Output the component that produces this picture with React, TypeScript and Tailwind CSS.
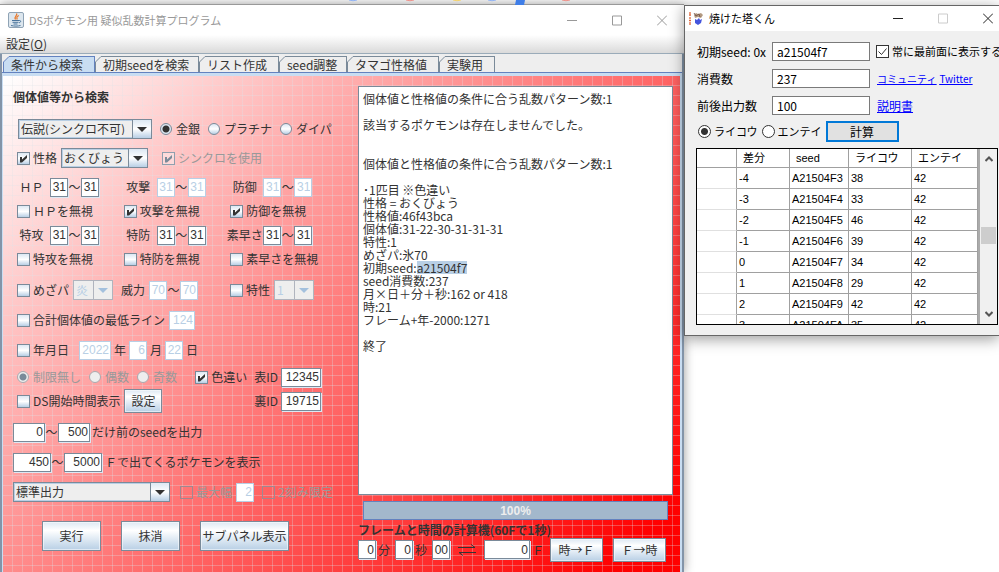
import type { ReactNode } from 'react'

const TABS = [
  { label: '条件から検索', width: 'w-[92px]' },
  { label: '初期seedを検索', width: 'w-[104px]' },
  { label: 'リスト作成', width: 'w-[80px]' },
  { label: 'seed調整', width: 'w-[68px]' },
  { label: 'タマゴ性格値', width: 'w-[92px]' },
  { label: '実験用', width: 'w-[56px]' },
]

const LOG_BEFORE = `個体値と性格値の条件に合う乱数パターン数:1

該当するポケモンは存在しませんでした。


個体値と性格値の条件に合う乱数パターン数:1

･1匹目 ※色違い
性格 = おくびょう
性格値:46f43bca
個体値:31-22-30-31-31-31
特性:1
めざパ:氷70
初期seed:`

const LOG_AFTER = `
seed消費数:237
月×日＋分＋秒:162 or 418
時:21
フレーム+年-2000:1271

終了`

const ROWS = [
  ['-4', 'A21504F3', '38', '42'],
  ['-3', 'A21504F4', '33', '42'],
  ['-2', 'A21504F5', '46', '42'],
  ['-1', 'A21504F6', '39', '42'],
  ['0', 'A21504F7', '34', '42'],
  ['1', 'A21504F8', '29', '42'],
  ['2', 'A21504F9', '42', '42'],
  ['3', 'A21504FA', '35', '42'],
]

interface CheckProps {
  label: string
  checked?: boolean
  disabled?: boolean
  clear?: boolean
}

function Check({ label, checked, disabled, clear }: CheckProps) {
  return (
    <label className={`flex items-center gap-[3px] ${disabled ? 'text-[#999999]' : ''}`}>
      <span className="relative flex">
        <input
          type="checkbox"
          defaultChecked={checked}
          disabled={disabled}
          className={`peer size-[13px] appearance-none border ${
            clear
              ? 'border-[#a08890] bg-transparent'
              : disabled
                ? 'border-[#8f9fae] bg-[#ffffff55]'
                : 'border-[#7a8a99] bg-linear-to-b from-[#dde8f3] via-white to-[#b8cfe5]'
          }`}
        />
        <svg className="pointer-events-none absolute inset-0 hidden size-[13px] peer-checked:block" viewBox="0 0 13 13">
          <path d="M3 5h2v2.500L10 3v3L5 10.500H3z" fill={disabled ? '#7a8a99' : '#333'} />
        </svg>
      </span>
      {label}
    </label>
  )
}

interface RadioProps {
  name: string
  label: string
  checked?: boolean
  disabled?: boolean
}

function Radio({ name, label, checked, disabled }: RadioProps) {
  return (
    <label className={`flex items-center gap-1 ${disabled ? 'text-[#999999]' : ''}`}>
      <input
        type="radio"
        name={name}
        defaultChecked={checked}
        disabled={disabled}
        className={`size-3 appearance-none rounded-full border ${
          disabled
            ? 'border-[#a9a9ae] bg-[#eeeeee] checked:bg-[radial-gradient(circle,#7a8a99_3px,transparent_4px)]'
            : 'border-[#7a8a99] bg-linear-to-b from-[#dde8f3] via-white to-[#b8cfe5] checked:bg-[radial-gradient(circle,#333_3px,#dde8f3_4px)]'
        }`}
      />
      {label}
    </label>
  )
}

interface FieldProps {
  name: string
  value: string
  width?: string
  disabled?: boolean
}

function Field({ name, value, width = 'w-[18px]', disabled }: FieldProps) {
  return (
    <input
      type="text"
      aria-label={name}
      defaultValue={value}
      disabled={disabled}
      className={`h-[19px] shrink-0 border bg-white pr-px text-right font-['Liberation_Sans',sans-serif] text-xs ${width} ${
        disabled ? 'border-[#b8cfe5] text-[#b8cfe5]' : 'border-[#7a8a99] text-[#333333] shadow-[1px_1px_0_#dde8f3]'
      }`}
    />
  )
}

interface ComboProps {
  name: string
  value: string
  width: string
  disabled?: boolean
}

function Combo({ name, value, width, disabled }: ComboProps) {
  return (
    <span className={`relative flex h-5 shrink-0 ${width}`}>
      <select
        aria-label={name}
        disabled={disabled}
        className={`size-full appearance-none border bg-[#eeeeee] pl-[2px] opacity-100 ${
          disabled ? 'border-[#b0b4be] text-[#b8cfe5]' : 'border-[#7a8a99] shadow-[inset_0_0_0_1px_#b8cfe5]'
        }`}
      >
        <option>{value}</option>
      </select>
      <span
        className={`pointer-events-none absolute inset-y-0 right-0 flex w-5 items-center justify-center border ${
          disabled ? 'border-[#b0b4be] bg-[#eeeeee]' : 'border-[#7a8a99] bg-linear-to-b from-[#dde8f3] via-white to-[#b8cfe5]'
        }`}
      >
        <svg width="10" height="5" viewBox="0 0 10 5">
          <path d="M0 0h10L5 5z" fill={disabled ? '#a3c0dd' : '#333'} />
        </svg>
      </span>
    </span>
  )
}

function MetalButton({ children, className }: { children: ReactNode; className: string }) {
  return (
    <button
      className={`shrink-0 border border-[#7a8a99] bg-linear-to-b from-[#dde8f3] via-white via-30% to-[#b8cfe5] shadow-[inset_0_0_0_1px_#ffffff88] ${className}`}
    >
      {children}
    </button>
  )
}

function Range({ name, disabled, value = '31' }: { name: string; disabled?: boolean; value?: string }) {
  return (
    <span className="flex items-center">
      <Field name={`${name} 最小`} value={value} disabled={disabled} />
      <span className="w-[13px] text-center">～</span>
      <Field name={`${name} 最大`} value={value} disabled={disabled} />
    </span>
  )
}

function Stat({ name, disabled }: { name: string; disabled?: boolean }) {
  return (
    <div className="flex items-center">
      <span className="flex w-[33px] justify-center pr-1">{name}</span>
      <Range name={name} disabled={disabled} />
    </div>
  )
}

function JavaIcon() {
  return (
    <svg className="size-4" viewBox="0 0 16 16" fill="none">
      <rect x=".5" y=".5" width="15" height="15" rx="1.5" fill="#dce6ee" stroke="#8fa3b5" />
      <path d="M8.5 1.5c1.5 2-3 3-1 6M10.8 3.5C8 5 8.8 5.600 9.200 7.500" stroke="#e8792b" strokeWidth="1.300" />
      <path d="M4 8.500h7M4.500 10.300h6M5.500 12h4M3 13.500c3 .8 7 .8 9.500 0M11.200 8.500c2-.4 2 1.900-.2 2.300" stroke="#4b759c" />
    </svg>
  )
}

function TowerIcon() {
  return (
    <svg className="size-4" viewBox="0 0 16 16" fill="none">
      <path d="M2 1v2M1 4h2M2 6v2M1 9.500h2M2 11v3" stroke="#e0673a" strokeWidth="1.300" />
      <path d="M6 4l2-2 2 1 3-1 2 2-2 3-3-1-3 1z" fill="#b39a82" />
      <path d="M6 2l2 3 3-2 1 3" stroke="#6a4a40" strokeWidth=".8" />
      <path d="M7 8l2 1 2-2 1 2 2-1-1 4-3 2-3-2z" fill="#4555dd" />
    </svg>
  )
}

function WindowButtons({ muted }: { muted?: boolean }) {
  const stroke = muted ? '#999' : '#222'
  return (
    <div className={`ml-auto flex items-center gap-[35px] ${muted ? 'pr-[17px]' : 'pr-[6px]'}`}>
      <button aria-label="最小化">
        <svg width="10" height="11" viewBox="0 0 10 11" stroke={stroke}><path d="M0 5.500h10" /></svg>
      </button>
      <button aria-label="最大化">
        <svg width="10" height="11" viewBox="0 0 10 11" fill="none" stroke={muted ? '#999' : '#ccc'}><path d="M.5 1h9v9h-9z" /></svg>
      </button>
      <button aria-label="閉じる">
        <svg width="10" height="11" viewBox="0 0 10 11" stroke={stroke}><path d="M0 .5l10 10M10 .5l-10 10" /></svg>
      </button>
    </div>
  )
}

function SearchForm() {
  return (
    <form className="w-[355px] shrink-0 pt-2 pr-[37px] pl-[10px]" onSubmit={(e) => e.preventDefault()}>
      <h1 className="flex h-[26px] items-center font-bold">個体値等から検索</h1>

      <div className="mt-[5px] flex h-7 items-center gap-2 pl-[5px]">
        <Combo name="種類" value="伝説(シンクロ不可)" width="w-[134px]" />
        <Radio name="version" label="金銀" checked />
        <Radio name="version" label="プラチナ" />
        <Radio name="version" label="ダイパ" />
      </div>
      <div className="flex h-[30px] items-center gap-1 pl-1">
        <Check label="性格" checked />
        <Combo name="性格" value="おくびょう" width="w-[87px]" />
        <div className="ml-[10px]">
          <Check label="シンクロを使用" checked disabled />
        </div>
      </div>

      {/* Individual values */}
      <div className="mt-[2px] ml-1 grid w-[320px] auto-rows-[24px] grid-cols-3 items-center">
        <Stat name="ＨＰ" />
        <Stat name="攻撃" disabled />
        <Stat name="防御" disabled />
        <Check label="ＨＰを無視" />
        <Check label="攻撃を無視" checked />
        <Check label="防御を無視" checked />
        <Stat name="特攻" />
        <Stat name="特防" />
        <Stat name="素早さ" />
        <Check label="特攻を無視" />
        <Check label="特防を無視" />
        <Check label="素早さを無視" />
      </div>

      <div className="mt-1 flex h-[30px] items-center gap-1 pl-1">
        <Check label="めざパ" />
        <Combo name="めざパ" value="炎" width="w-10" disabled />
        <span className="ml-1">威力</span>
        <Range name="威力" value="70" disabled />
        <div className="ml-7">
          <Check label="特性" />
        </div>
        <Combo name="特性" value="1" width="w-10" disabled />
      </div>
      <div className="flex h-[30px] items-center gap-1 pl-1">
        <Check label="合計個体値の最低ライン" />
        <Field name="最低ライン" value="124" width="w-[26px]" disabled />
      </div>
      <div className="flex h-[30px] items-center gap-[3px] pl-1">
        <Check label="年月日" />
        <span className="w-1" />
        <Field name="年" value="2022" width="w-8" disabled />
        年
        <Field name="月" value="6" disabled />
        月
        <Field name="日" value="22" disabled />
        日
      </div>

      <div className="flex h-6 items-center gap-2 pl-1">
        <Radio name="parity" label="制限無し" checked disabled />
        <Radio name="parity" label="偶数" disabled />
        <Radio name="parity" label="奇数" disabled />
        <div className="ml-auto flex items-center gap-[3px]">
          <Check label="色違い" checked />
          <span className="ml-1">表ID</span>
          <Field name="表ID" value="12345" width="w-10" />
        </div>
      </div>
      <div className="flex h-6 items-center gap-1 pl-1">
        <Check label="DS開始時間表示" />
        <MetalButton className="h-6 w-[38px]">設定</MetalButton>
        <div className="ml-auto flex items-center gap-[3px]">
          裏ID
          <Field name="裏ID" value="19715" width="w-10" />
        </div>
      </div>

      <div className="mt-1 flex h-[30px] items-center">
        <Field name="seed 最小" value="0" width="w-8" />
        <span className="w-[13px] text-center">～</span>
        <Field name="seed 最大" value="500" width="w-8" />
        <span className="ml-[2px]">だけ前のseedを出力</span>
      </div>
      <div className="flex h-[30px] items-center">
        <Field name="F 最小" value="450" width="w-[38px]" />
        <span className="w-[13px] text-center">～</span>
        <Field name="F 最大" value="5000" width="w-[38px]" />
        <span className="ml-[3px]">Ｆで出てくるポケモンを表示</span>
      </div>
      <div className="flex h-[30px] items-center gap-1">
        <Combo name="出力" value="標準出力" width="w-[157px]" />
        <div className="ml-[6px]">
          <Check label="最大幅" disabled clear />
        </div>
        <Field name="最大幅" value="2" disabled />
        <div className="ml-1">
          <Check label="2刻み限定" disabled clear />
        </div>
      </div>

      <div className="mt-[14px] flex gap-5 pl-[29px]">
        <MetalButton className="h-[30px] w-[59px]">実行</MetalButton>
        <MetalButton className="h-[30px] w-[59px]">抹消</MetalButton>
        <MetalButton className="h-[30px] w-[89px]">サブパネル表示</MetalButton>
      </div>
    </form>
  )
}

function OutputPane() {
  return (
    <div className="flex min-w-0 flex-1 flex-col pt-[10px] pr-[7px] pb-[10px]">
      <div
        role="log"
        className="flex-1 overflow-hidden border border-[#7a8a99] bg-white pt-[5px] pl-1 leading-[13px] whitespace-pre text-[#333333]"
      >
        {LOG_BEFORE}
        <mark className="inline-block h-[13px] bg-[#b8cfe5] align-top text-inherit">a21504f7</mark>
        {LOG_AFTER}
      </div>
      <div className="mx-[5px] mt-[6px] flex h-[19px] items-center justify-center border border-[#6382bf] bg-[#a3b8cc] font-['Liberation_Sans',sans-serif] font-bold text-[#eeeeee]">
        100%
      </div>
      <h2 className="mt-[3px] flex h-[14px] items-center font-bold">フレームと時間の計算機(60Fで1秒)</h2>
      <div className="flex h-[25px] items-center gap-[2px]">
        <Field name="分" value="0" />
        分
        <span className="w-px" />
        <Field name="秒" value="0" />
        秒
        <span className="w-px" />
        <Field name="1/60秒" value="00" />
        <svg className="mx-[5px]" width="20" height="12" viewBox="0 0 20 12" fill="none" stroke="#333">
          <path d="M1 3.500h17l-4-3M19 8.500H2l4 3" />
        </svg>
        <Field name="フレーム" value="0" width="w-[46px]" />
        Ｆ
        <MetalButton className="ml-1 h-6 w-[53px]">時→Ｆ</MetalButton>
        <MetalButton className="ml-2 h-6 w-[53px]">Ｆ→時</MetalButton>
      </div>
    </div>
  )
}

function SearchWindow() {
  return (
    <main className="mt-1 flex min-w-0 flex-1 flex-col border-t border-[#999999] bg-[#eeeeee] shadow-[0_0_10px_#00000066]">
      <header className="flex h-[30px] items-center gap-[5px] bg-white pl-2 text-[11px] text-[#999999]">
        <JavaIcon />
        <span>DSポケモン用 疑似乱数計算プログラム</span>
        <WindowButtons muted />
      </header>
      <nav className="flex h-[19px] items-center border-b border-[#9aabb9] bg-linear-to-b from-white to-[#dadada] pl-[6px]">
        <button>設定(<u>O</u>)</button>
      </nav>

      <div className="flex flex-1 flex-col border-x-2 border-[#8394a8] pt-[2px]">
        <div role="tablist" className="flex h-4 pl-px">
          {TABS.map((tab, i) => (
            <button key={tab.label} role="tab" aria-selected={i === 0} className={`flex shrink-0 ${tab.width}`}>
              <svg className="shrink-0" width="6" height="16" viewBox="0 0 6 16">
                <path
                  d="M.5 17V6L6 .5V17"
                  fill={i === 0 ? '#c8ddf2' : '#eeeeee'}
                />
                <path d="M.5 17V6L6 .5" fill="none" stroke={i === 0 ? '#6382bf' : '#7a8a99'} />
              </svg>
              <span
                className={`flex h-4 flex-1 items-center border-t border-r pl-[2px] ${
                  i === 0 ? 'border-[#6382bf] bg-[#c8ddf2]' : 'border-[#7a8a99]'
                }`}
              >
                {tab.label}
              </span>
            </button>
          ))}
        </div>
        <div className="flex flex-1 border-t border-[#6382bf]">
          <div className="flex flex-1 border-t-[3px] border-r-2 border-l border-[#c8ddf2] bg-[repeating-linear-gradient(90deg,transparent_0_9px,#dde4e84d_9px_10px),repeating-linear-gradient(180deg,transparent_0_9px,#dde4e84d_9px_10px),linear-gradient(135deg,#fff_0%,#f00_94%)]">
            <SearchForm />
            <OutputPane />
          </div>
        </div>
      </div>
    </main>
  )
}

const toolInput = 'h-[19px] w-[98px] border border-[#7a7a7a] bg-white pl-1 text-xs text-black'
const toolCell = 'h-[21px] border-r border-b border-[#a0a0a0] pl-[2px]'
const toolHead = 'h-[19px] border-r border-b border-[#a0a0a0] font-normal text-left'

function ToolRadio({ label, checked }: { label: string; checked?: boolean }) {
  return (
    <label className="flex items-center gap-[3px]">
      <input
        type="radio"
        name="target"
        defaultChecked={checked}
        className="size-[13px] appearance-none rounded-full border border-[#333333] bg-white checked:bg-[radial-gradient(circle,#333_3px,#fff_4px)]"
      />
      {label}
    </label>
  )
}

function TowerWindow() {
  return (
    <aside className="relative mt-[5px] w-[315px] shrink-0 self-start overflow-hidden border-y border-l border-[#666666] bg-[#f0f0f0] pb-[10px] text-black shadow-[0_3px_14px_#00000066]">
      <header className="flex h-[25px] items-center gap-[5px] bg-white pl-[3px] text-[11px]">
        <TowerIcon />
        <span>焼けた塔くん</span>
        <WindowButtons />
      </header>

      <div className="mt-[11px] grid auto-rows-[19px] grid-cols-[75px_98px_1fr] items-center gap-y-2 pl-3 whitespace-nowrap">
        <label htmlFor="seed">初期seed: 0x</label>
        <input id="seed" className={toolInput} defaultValue="a21504f7" />
        <label className="flex items-center gap-[3px] pl-[6px] text-[11px]">
          <span className="relative flex">
            <input type="checkbox" defaultChecked className="peer size-[13px] appearance-none border border-[#333333] bg-white" />
            <svg className="pointer-events-none absolute inset-0 hidden size-[13px] peer-checked:block" viewBox="0 0 13 13" fill="none" stroke="#333">
              <path d="M2.500 6.500l3 3 5-6" />
            </svg>
          </span>
          常に最前面に表示する
        </label>
        <label htmlFor="advance">消費数</label>
        <input id="advance" className={toolInput} defaultValue="237" />
        <div className="flex gap-[3px] pl-[7px] text-[10px] text-[#0000ff] underline">
          <a href="#community">コミュニティ</a>
          <a href="#twitter">Twitter</a>
        </div>
        <label htmlFor="count">前後出力数</label>
        <input id="count" className={toolInput} defaultValue="100" />
        <a href="#manual" className="pl-[7px] text-[#0000ff] underline">説明書</a>
      </div>

      <div className="mt-[6px] flex h-[21px] items-center gap-1 pl-[13px] text-[11px]">
        <ToolRadio label="ライコウ" checked />
        <ToolRadio label="エンテイ" />
        <button className="h-[21px] w-[73px] border-2 border-[#0078d7] bg-[#e1e1e1] text-xs">計算</button>
      </div>

      <div className="mt-[6px] mr-px ml-[11px] flex h-[177px] overflow-hidden border border-black bg-[#ababab]">
        <div className="flex-1 overflow-hidden">
          <table className="w-[281px] table-fixed border-separate border-spacing-0 bg-white font-['Liberation_Sans','Noto_Sans_CJK_JP',sans-serif] text-[11px] leading-none">
            <thead>
              <tr>
                <th className={`w-10 ${toolHead}`} />
                <th className={`w-[53px] pl-[6px] ${toolHead}`}>差分</th>
                <th className={`w-[59px] pl-[6px] ${toolHead}`}>seed</th>
                <th className={`w-[63px] pl-[6px] ${toolHead}`}>ライコウ</th>
                <th className={`w-[66px] pl-[6px] ${toolHead}`}>エンテイ</th>
              </tr>
            </thead>
            <tbody>
              {ROWS.map((row) => (
                <tr key={row[0]}>
                  <td className="h-[21px] border-r border-b border-r-[#a0a0a0] border-b-[#e0e0e0]" />
                  {row.map((cell, i) => (
                    <td key={i} className={toolCell}>{cell}</td>
                  ))}
                </tr>
              ))}
            </tbody>
          </table>
        </div>
        <div className="flex w-[17px] shrink-0 flex-col items-center bg-[#f0f0f0] py-[7px]">
          <svg width="8" height="6" viewBox="0 0 8 6" fill="none" stroke="#555" strokeWidth="2"><path d="M.5 5L4 1.500 7.500 5" /></svg>
          <div className="mt-[65px] h-[17px] w-[15px] bg-[#cdcdcd]" />
          <svg className="mt-auto" width="8" height="6" viewBox="0 0 8 6" fill="none" stroke="#555" strokeWidth="2"><path d="M.5 1L4 4.500 7.500 1" /></svg>
        </div>
      </div>
    </aside>
  )
}

export default function App() {
  return (
    <div className="relative flex min-h-screen overflow-hidden bg-white font-['Noto_Sans_CJK_JP',sans-serif] text-xs leading-none whitespace-nowrap text-[#333333]">
      {/* Lower edge of the page logo behind the windows */}
      <svg className="absolute top-0 left-[340px]" width="240" height="5" viewBox="0 0 240 5" fill="none">
        <path d="M9 0q4 1.500 8 0M148 0q4 1.500 8 0" stroke="#8fb2f5" />
        <path d="M66 0q4 1.500 8 0M222 0q4 1.500 8 0" stroke="#ee8f88" />
        <path d="M113 0q4 1.500 8 0" stroke="#f5d268" />
        <path d="M176 0h9l-1 5h-9z" fill="#3f7ee8" />
      </svg>
      <SearchWindow />
      <TowerWindow />
    </div>
  )
}
